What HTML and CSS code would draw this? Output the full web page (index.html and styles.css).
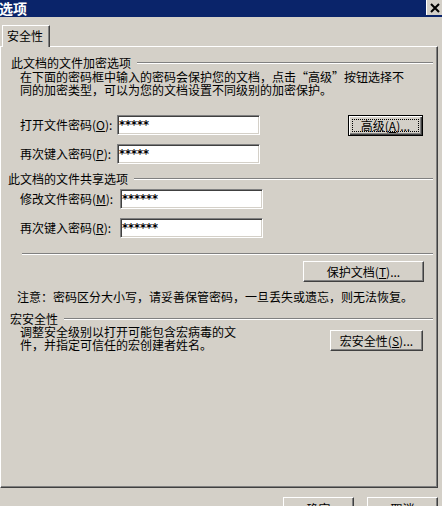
FILE: index.html
```html
<!DOCTYPE html>
<html lang="zh-CN">
  <head>
    <meta charset="UTF-8" />
    <meta name="viewport" content="width=device-width, initial-scale=1.0" />
    <title>选项</title>
    <link rel="stylesheet" href="styles.css">
  </head>
  <body>
    <div class="window">
      <div class="titlebar">
        <span class="title">选项</span>
        <span class="close">
          <svg width="12" height="10" viewBox="0 0 12 10">
            <path d="M2 1 L10 9 M10 1 L2 9" stroke="#000" stroke-width="2" fill="none" />
          </svg>
        </span>
      </div>

      <div class="tabstrip">
        <div class="tab">安全性</div>
      </div>

      <div class="panel">
        <div class="group-title g1"><span>此文档的文件加密选项</span><i class="etch"></i></div>
        <p class="desc">在下面的密码框中输入的密码会保护您的文档，点击“高级”按钮选择不<br>同的加密类型，可以为您的文档设置不同级别的加密保护。</p>

        <div class="field r1">
          <label class="label">打开文件密码(<u>O</u>):</label>
          <input class="textbox" type="text" value="*****" readonly />
          <button class="btn default"><span class="focus">高级(<u>A</u>)...</span></button>
        </div>
        <div class="field r2">
          <label class="label">再次键入密码(<u>P</u>):</label>
          <input class="textbox" type="text" value="*****" readonly />
        </div>

        <div class="group-title g2"><span>此文档的文件共享选项</span><i class="etch"></i></div>
        <div class="field r3">
          <label class="label wide">修改文件密码(<u>M</u>):</label>
          <input class="textbox" type="text" value="******" readonly />
        </div>
        <div class="field r4">
          <label class="label wide">再次键入密码(<u>R</u>):</label>
          <input class="textbox" type="text" value="******" readonly />
        </div>

        <div class="separator"></div>

        <div class="protect-row">
          <button class="btn protect">保护文档(<u>T</u>)...</button>
        </div>

        <p class="note">注意：密码区分大小写，请妥善保管密码，一旦丢失或遗忘，则无法恢复。</p>

        <div class="group-title g3"><span>宏安全性</span><i class="etch"></i></div>
        <div class="macro-row">
          <p class="macro-text">调整安全级别以打开可能包含宏病毒的文<br>件，并指定可信任的宏创建者姓名。</p>
          <button class="btn macro">宏安全性(<u>S</u>)...</button>
        </div>
      </div>

      <div class="dialog-buttons">
        <button class="btn ok">确定</button>
        <button class="btn cancel">取消</button>
      </div>
    </div>
  </body>
</html>
```

FILE: styles.css
```css
/* Classic dialog look */
body {
  margin: 0;
  font-family: "Noto Sans CJK SC", "DejaVu Sans", sans-serif;
  font-size: 12px;
  color: #000;
  background-color: #d4d0c8;
}

.window {
  width: 442px;
  height: 506px;
  overflow: hidden;
  background-color: #d4d0c8;
}

.titlebar {
  height: 17px;
  background-color: #0a246a;
  display: flex;
  justify-content: space-between;
  align-items: flex-start;
}

.title {
  color: #fff;
  font-weight: bold;
  font-size: 14px;
  line-height: 16px;
  margin-left: -1px;
}

.close {
  width: 15px;
  height: 15px;
  background-color: #d4d0c8;
  border-left: 1px solid #fff;
  display: flex;
  align-items: center;
  justify-content: center;
}

.tabstrip {
  display: flex;
  margin-top: 8px;
}

.tab {
  z-index: 1;
  width: 48px;
  height: 22px;
  box-sizing: border-box;
  margin-left: 2px;
  margin-bottom: -1px;
  background-color: #d4d0c8;
  border-top: 1px solid #fff;
  border-left: 1px solid #fff;
  border-right: 1px solid #404040;
  box-shadow: inset -1px 0 #808080;
  padding-left: 4px;
  line-height: 20px;
}

.panel {
  width: 438px;
  height: 442px;
  box-sizing: border-box;
  border-top: 1px solid #fff;
  border-left: 1px solid #fff;
  border-right: 1px solid #404040;
  border-bottom: 1px solid #404040;
  box-shadow: inset -1px -1px #808080;
}

p {
  margin: 0;
}

/* group headers with etched line */
.group-title {
  display: flex;
  align-items: center;
  height: 13px;
  line-height: 13px;
  margin-right: 4px;
}

.etch {
  flex: 1;
  height: 0;
  border-top: 1px solid #808080;
  border-bottom: 1px solid #fff;
  margin-left: 6px;
}

.g1 {
  margin-top: 9px;
  padding-left: 10px;
}

.g2 {
  margin-top: 8px;
  padding-left: 7px;
}

.g3 {
  margin-top: 9px;
  padding-left: 9px;
}

.desc {
  margin-top: 1px;
  padding-left: 19px;
  line-height: 13px;
}

.field {
  display: flex;
  align-items: flex-start;
  height: 20px;
  padding-left: 19px;
}

.r1 { margin-top: 19px; }
.r2 { margin-top: 9px; }
.r3 { margin-top: 4px; }
.r4 { margin-top: 9px; }

.label {
  width: 97px;
  line-height: 20px;
}

.label.wide {
  width: 100px;
}

u {
  text-decoration: underline;
}

.textbox {
  width: 143px;
  height: 20px;
  box-sizing: border-box;
  margin: 0;
  padding: 0 0 0 1px;
  background-color: #fff;
  border: 1px solid;
  border-color: #808080 #fff #fff #808080;
  box-shadow: inset 1px 1px #404040, inset -1px -1px #d4d0c8;
  font-family: "DejaVu Sans", sans-serif;
  font-weight: bold;
  font-size: 11.5px;
  color: #000;
  outline: none;
}

/* raised buttons */
.btn {
  height: 21px;
  box-sizing: border-box;
  padding: 0;
  background-color: #d4d0c8;
  border: 1px solid;
  border-color: #fff #404040 #404040 #fff;
  box-shadow: inset -1px -1px #808080;
  font-family: "Noto Sans CJK SC", "DejaVu Sans", sans-serif;
  font-size: 12px;
  line-height: 17px;
  color: #000;
}

.btn.default {
  width: 75px;
  margin-left: auto;
  margin-right: 14px;
  border-color: #000;
  box-shadow: inset 1px 1px #fff, inset -1px -1px #404040, inset -2px -2px #808080;
  display: flex;
  align-items: stretch;
  padding: 3px;
}

.focus {
  flex: 1;
  border: 1px dotted #000;
  line-height: 11px;
}

.separator {
  margin: 15px 4px 0 21px;
  border-top: 1px solid #808080;
  border-bottom: 1px solid #fff;
}

.protect-row {
  display: flex;
  justify-content: flex-end;
  margin-top: 6px;
  padding-right: 13px;
}

.btn.protect {
  width: 121px;
}

.note {
  margin-top: 8px;
  padding-left: 16px;
  line-height: 13px;
}

.macro-row {
  display: flex;
  justify-content: space-between;
  align-items: flex-start;
  padding-left: 19px;
  padding-right: 14px;
}

.macro-text {
  line-height: 13px;
}

.btn.macro {
  width: 93px;
  margin-top: 5px;
}

.dialog-buttons {
  display: flex;
  justify-content: flex-end;
  gap: 13px;
  margin-top: 9px;
  padding-right: 4px;
}

.btn.ok,
.btn.cancel {
  width: 71px;
  height: 22px;
}
```
